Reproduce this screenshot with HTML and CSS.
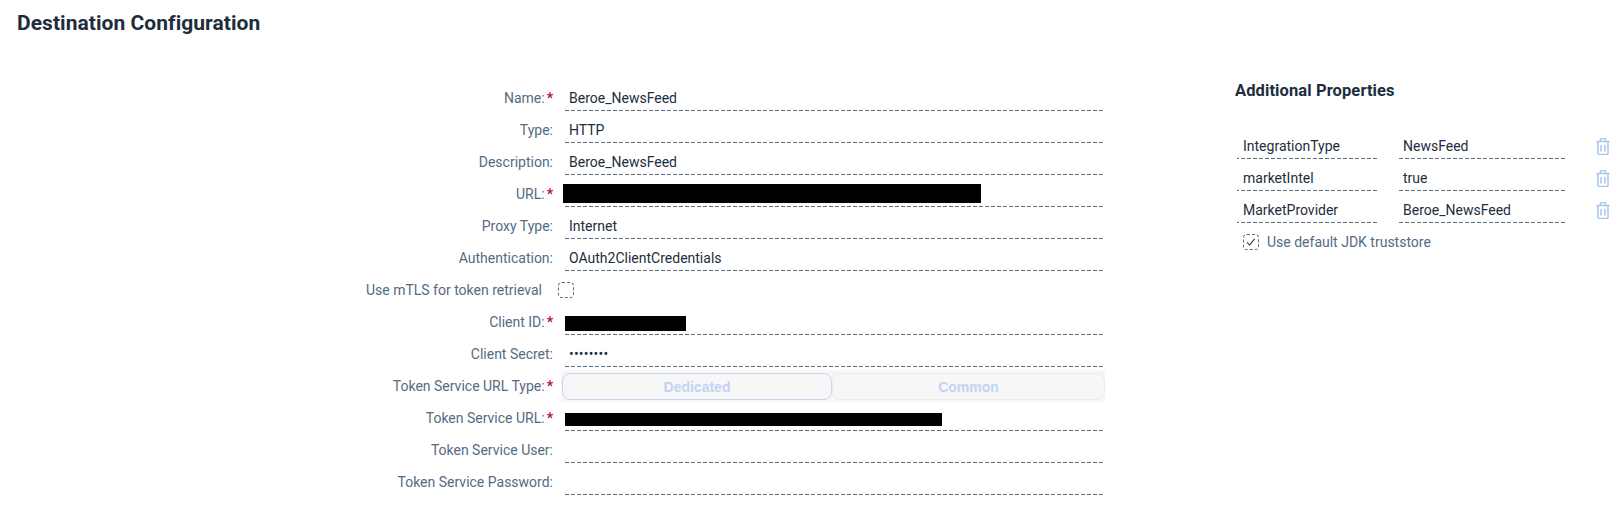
FILE: index.html
```html
<!DOCTYPE html>
<html lang="en">
<head>
  <meta charset="UTF-8">
  <title>Destination Configuration</title>
  <link rel="stylesheet" href="styles.css">
</head>
<body>

  <h1 class="page-title">Destination Configuration</h1>

  <div class="content">
    <div class="form">
      <div class="row">
        <div class="label">Name:<span class="req">*</span></div>
        <div class="field">Beroe_NewsFeed</div>
      </div>
      <div class="row">
        <div class="label">Type:</div>
        <div class="field">HTTP</div>
      </div>
      <div class="row">
        <div class="label">Description:</div>
        <div class="field">Beroe_NewsFeed</div>
      </div>
      <div class="row">
        <div class="label">URL:<span class="req">*</span></div>
        <div class="field"><div class="redact redact-url"></div></div>
      </div>
      <div class="row">
        <div class="label">Proxy Type:</div>
        <div class="field">Internet</div>
      </div>
      <div class="row">
        <div class="label">Authentication:</div>
        <div class="field">OAuth2ClientCredentials</div>
      </div>
      <div class="row">
        <div class="label label-check">Use mTLS for token retrieval</div>
        <div class="check-cell"><span class="checkbox"></span></div>
      </div>
      <div class="row">
        <div class="label">Client ID:<span class="req">*</span></div>
        <div class="field"><div class="redact redact-client"></div></div>
      </div>
      <div class="row">
        <div class="label">Client Secret:</div>
        <div class="field secret">••••••••</div>
      </div>
      <div class="row">
        <div class="label">Token Service URL Type:<span class="req">*</span></div>
        <div class="segmented">
          <div class="seg seg-on">Dedicated</div>
          <div class="seg">Common</div>
        </div>
      </div>
      <div class="row">
        <div class="label">Token Service URL:<span class="req">*</span></div>
        <div class="field"><div class="redact redact-token"></div></div>
      </div>
      <div class="row">
        <div class="label">Token Service User:</div>
        <div class="field"></div>
      </div>
      <div class="row">
        <div class="label">Token Service Password:</div>
        <div class="field"></div>
      </div>
    </div>

    <div class="props">
      <h2 class="props-title">Additional Properties</h2>
      <div class="prop">
        <div class="field">IntegrationType</div>
        <div class="field">NewsFeed</div>
        <svg class="trash" viewBox="0 0 14 17"><path d="M0.5 3.5h13M4.5 3.5v-2a1 1 0 0 1 1-1h3a1 1 0 0 1 1 1v2M2 3.5v11.5a1.500 1.500 0 0 0 1.500 1.500h7a1.500 1.500 0 0 0 1.500-1.500v-11.500M5 7v6.500M9 7v6.500"/></svg>
      </div>
      <div class="prop">
        <div class="field">marketIntel</div>
        <div class="field">true</div>
        <svg class="trash" viewBox="0 0 14 17"><path d="M0.5 3.5h13M4.5 3.5v-2a1 1 0 0 1 1-1h3a1 1 0 0 1 1 1v2M2 3.5v11.5a1.500 1.500 0 0 0 1.500 1.500h7a1.500 1.500 0 0 0 1.500-1.500v-11.500M5 7v6.500M9 7v6.500"/></svg>
      </div>
      <div class="prop">
        <div class="field">MarketProvider</div>
        <div class="field">Beroe_NewsFeed</div>
        <svg class="trash" viewBox="0 0 14 17"><path d="M0.5 3.5h13M4.5 3.5v-2a1 1 0 0 1 1-1h3a1 1 0 0 1 1 1v2M2 3.5v11.5a1.500 1.500 0 0 0 1.500 1.500h7a1.500 1.500 0 0 0 1.500-1.500v-11.500M5 7v6.500M9 7v6.500"/></svg>
      </div>
      <div class="truststore">
        <span class="checkbox">
          <svg class="tick" viewBox="0 0 16 16"><path d="M3.500 8.500l3 3 5.500-7"/></svg>
        </span>
        <span class="truststore-text">Use default JDK truststore</span>
      </div>
    </div>
  </div>

</body>
</html>
```

FILE: styles.css
```css
body {
  margin: 0;
  font-family: Roboto, "Liberation Sans", sans-serif;
  font-size: 14px;
  color: #1d2d3e;
  background-color: #fff;
}

.page-title {
  margin: 0;
  padding: 9px 0 0 17px;
  box-sizing: border-box;
  height: 79px;
  font-size: 21px;
  line-height: 28px;
  font-weight: 700;
  letter-spacing: 0.05px;
}

.content {
  display: flex;
  padding-left: 340px;
}

.form {
  flex: none;
  width: 763px;
}

.row {
  display: flex;
  height: 32px;
}

.label {
  flex: none;
  width: 213px;
  padding-top: 9px;
  line-height: 20px;
  text-align: right;
  color: #556b82;
  box-sizing: border-box;
}

.label-check {
  padding-right: 11px;
}

.req {
  color: #ba066c;
  font-weight: 700;
  margin-left: 2px;
}

.field {
  box-sizing: border-box;
  height: 32px;
  padding: 9px 0 0 6px;
  line-height: 20px;
  background: repeating-linear-gradient(270deg, #556b82 0 4px, transparent 4px 6px) left bottom / 100% 1px no-repeat;
  white-space: nowrap;
}

.row .field {
  width: 540px;
  margin-left: 10px;
}

.secret {
  letter-spacing: 0.2px;
}

.redact {
  background-color: #000;
}

.row .field:has(.redact) {
  padding: 0;
}

.redact-url {
  width: 418px;
  height: 19px;
  margin-top: 9px;
}

.redact-client {
  width: 121px;
  height: 15px;
  margin: 13px 0 0 2px;
}

.redact-token {
  width: 377px;
  height: 13px;
  margin: 14px 0 0 2px;
}

.check-cell {
  margin-left: 5px;
  padding-top: 11px;
}

.checkbox {
  display: block;
  box-sizing: border-box;
  width: 16px;
  height: 16px;
  border: 1px dashed #556b82;
  border-radius: 4px;
  flex: none;
}

.segmented {
  display: flex;
  flex: none;
  width: 544px;
  height: 32px;
  margin: 3px 0 0 8px;
  padding: 3px 0 2px 1px;
  box-sizing: border-box;
  background-color: #f7f7f7;
}

.seg {
  box-sizing: border-box;
  flex: 1;
  border: 1px solid #ebebeb;
  border-radius: 8px;
  font-family: "Liberation Sans", sans-serif;
  font-weight: 700;
  line-height: 26px;
  text-align: center;
  color: #c2d4f2;
}

.seg-on {
  flex: none;
  width: 270px;
  border: 1.5px solid #c6d7f3;
}

.props {
  margin-left: 132px;
}

.props-title {
  margin: 1px 0 25px;
  font-size: 16.5px;
  line-height: 22px;
  font-weight: 700;
  letter-spacing: 0.1px;
}

.prop {
  display: grid;
  grid-template-columns: 140px 168px 14px;
  column-gap: 20px;
  height: 32px;
  margin-left: 2px;
}

.trash {
  width: 14px;
  height: 17px;
  margin: 11px 0 0 11px;
  fill: none;
  stroke: #a9c5f5;
  stroke-width: 1.5;
}

.truststore {
  display: flex;
  align-items: center;
  gap: 8px;
  margin: 11px 0 0 8px;
  color: #556b82;
}

.truststore-text {
  line-height: 16px;
}

.tick {
  display: block;
  width: 14px;
  height: 14px;
  fill: none;
  stroke: #1d2d3e;
  stroke-width: 1.2;
}
```
